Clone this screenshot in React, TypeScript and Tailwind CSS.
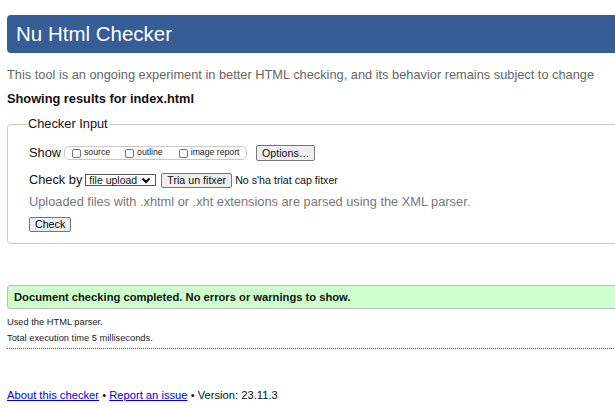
import React from "react";

function Box() {
  return <span className="inline-block w-[9px] h-[9px] border border-[#767676] rounded-[2px] bg-white mr-[3px]" />;
}

export default function App() {
  return (
    <div className="w-[615px] h-[408px] overflow-hidden bg-white font-['Liberation_Sans',Arial,sans-serif] text-black">
      <div className="w-[690px] pl-[7px] pt-[15px]">
        <h1 className="h-[38px] rounded-l-[4px] bg-[#365d95] text-white text-[20.5px] pl-[9px] flex items-center leading-none">
          Nu Html Checker
        </h1>
        <p className="mt-[14px] text-[12.8px] leading-[16px] text-[#666]">
          This tool is an ongoing experiment in better HTML checking, and its behavior remains subject to change
        </p>
        <p className="mt-[8px] text-[12.8px] leading-[16px] font-bold text-[#111]">Showing results for index.html</p>

        <fieldset className="mt-[9px] border border-[#c8c8c8] rounded-[4px] pl-[21px] pb-[11px]">
          <legend className="text-[12.8px] leading-[16px] px-[1px] -ml-[2px] text-[#111]">Checker Input</legend>
          <div className="mt-[13px] h-[16px] flex items-center text-[12.8px] text-[#111]">
            <span>Show</span>
            <span className="ml-[3px] h-[14px] w-[183px] border border-[#c8c8c8] rounded-[5px] flex items-center pl-[7px] text-[8.7px] text-[#222]">
              <Box />
              <span>source</span>
              <span className="ml-[15px] flex items-center">
                <Box />
                <span>outline</span>
              </span>
              <span className="ml-[16px] flex items-center">
                <Box />
                <span>image report</span>
              </span>
            </span>
            <span className="ml-[9px] h-[16px] px-[5px] border border-[#767676] rounded-[2px] bg-[#efefef] text-[10.67px] flex items-center leading-none">
              Options…
            </span>
          </div>
          <div className="mt-[11px] h-[16px] flex items-center text-[12.8px] text-[#111]">
            <span>Check by</span>
            <span className="ml-[3px] h-[12px] w-[71px] border border-[#555] flex items-center pl-[3px] text-[10.5px] leading-none bg-white">
              <span>file upload</span>
              <svg width="10" height="7" viewBox="0 0 10 7" className="ml-[4px]">
                <polyline points="1.5,1.5 5,5 8.5,1.5" fill="none" stroke="#000" strokeWidth="2" />
              </svg>
            </span>
            <span className="ml-[5px] h-[15px] px-[5px] border border-[#767676] rounded-[2px] bg-[#efefef] text-[10.67px] flex items-center leading-none">
              Tria un fitxer
            </span>
            <span className="ml-[3px] text-[10.67px]">No s'ha triat cap fitxer</span>
          </div>
          <p className="mt-[6px] text-[12.8px] leading-[16px] text-[#777]">
            Uploaded files with .xhtml or .xht extensions are parsed using the XML parser.
          </p>
          <div className="mt-[7px] flex">
            <span className="h-[15px] px-[5px] border border-[#767676] rounded-[2px] bg-[#efefef] text-[10.67px] flex items-center leading-none">
              Check
            </span>
          </div>
        </fieldset>

        <div className="mt-[41px] h-[24px] border border-[#bcbcbc] rounded-[3px] bg-[#ccffcc] flex items-center pl-[6px] text-[11.2px] font-bold text-[#111]">
          Document checking completed. No errors or warnings to show.
        </div>

        <div className="border-b border-dotted border-[#555] pb-[4px] text-[9.3px] text-[#222]">
          <p className="mt-[7px] leading-[12px]">Used the HTML parser.</p>
          <p className="mt-[4px] leading-[12px]">Total execution time 5 milliseconds.</p>
        </div>

        <p className="mt-[40px] leading-[12px] text-[11.2px] text-[#111]">
          <a className="text-[#0000ee] underline">About this checker</a> • <a className="text-[#0000ee] underline">Report an issue</a> • Version: 23.11.3
        </p>
      </div>
    </div>
  );
}
